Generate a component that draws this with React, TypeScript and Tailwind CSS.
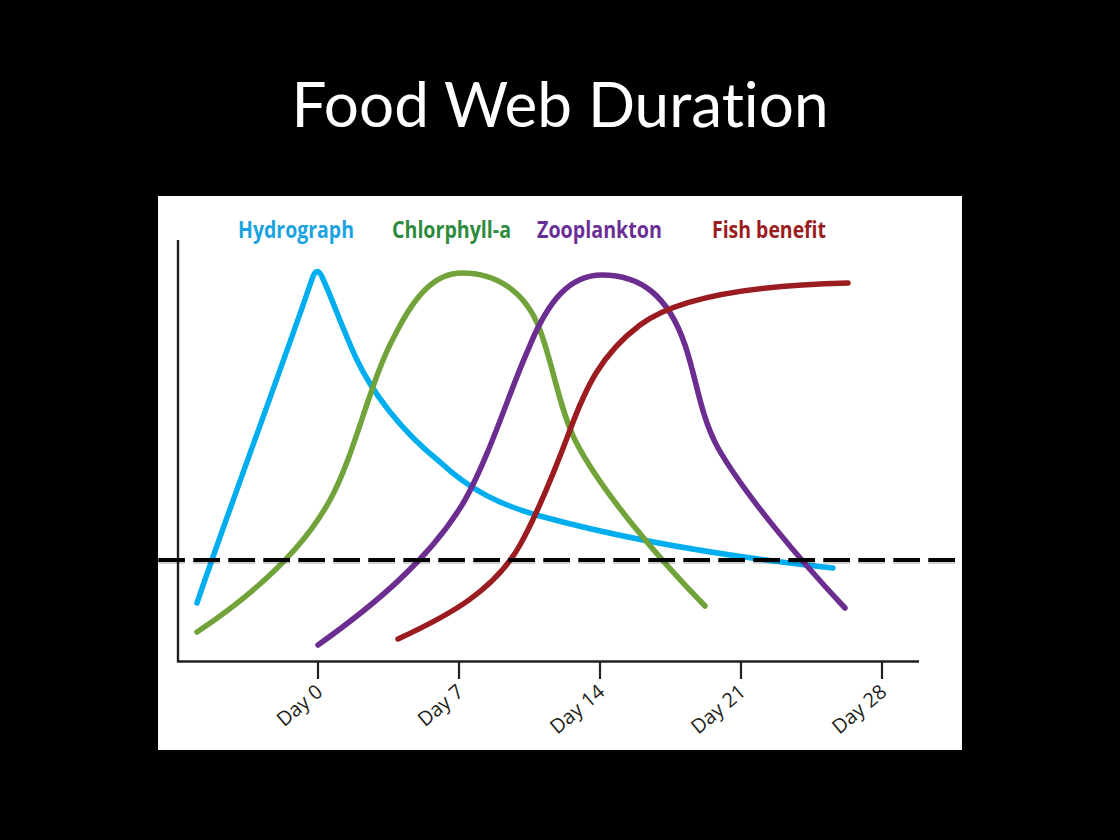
import React from 'react';

const curves = [
  {
    name: 'Hydrograph',
    color: '#00aeef',
    d: 'M197,603 C225,520 290,345 312,279 Q317,264 323,279 C331,296 343,330 356,358 C372,392 400,430 440,462 C470,490 500,505 540,516 C620,538 720,556 833,568',
  },
  {
    name: 'Chlorophyll-a',
    color: '#72a23a',
    d: 'M197,632 C245,600 300,555 330,500 C355,455 370,380 395,335 C415,295 435,273 462,273 C495,273 525,290 540,330 C553,365 560,410 575,440 C600,490 660,560 705,606',
  },
  {
    name: 'Zooplankton',
    color: '#6b2d90',
    d: 'M318,645 C370,608 430,560 465,500 C490,455 510,390 528,350 C548,300 570,275 602,275 C640,275 668,295 685,345 C697,380 700,415 718,448 C745,495 800,560 845,608',
  },
  {
    name: 'Fish benefit',
    color: '#9b1c20',
    d: 'M398,639 C450,615 495,590 520,545 C535,518 555,470 570,430 C585,390 600,355 640,325 C680,295 760,285 848,283',
  },
];

const legend = [
  { label: 'Hydrograph', x: 238, len: 116, color: '#1aa3e0' },
  { label: 'Chlorphyll-a', x: 392, len: 119, color: '#2e8b3e' },
  { label: 'Zooplankton', x: 537, len: 125, color: '#6a2f96' },
  { label: 'Fish benefit', x: 712, len: 114, color: '#9b1b20' },
];

const ticks = [
  { x: 318, label: 'Day 0' },
  { x: 459, label: 'Day 7' },
  { x: 600, label: 'Day 14' },
  { x: 741, label: 'Day 21' },
  { x: 882, label: 'Day 28' },
];

export default function App() {
  return (
    <div className="w-[1120px] h-[840px] bg-black flex flex-col items-center">
      <h1 className="mt-[72px] text-[62px] leading-[62px] text-white font-['Lato',sans-serif] font-normal [font-variant-ligatures:none]">
        Food Web Duration
      </h1>

      <div className="mt-[62px] w-[804px] h-[554px] bg-white">
        <svg width="804" height="554" viewBox="158 196 804 554" className="block">
          {/* legend */}
          {legend.map((l) => (
            <text
              key={l.label}
              x={l.x}
              y={238}
              fill={l.color}
              fontFamily="'Open Sans', sans-serif"
              fontWeight={700}
              fontSize={24}
              textLength={l.len}
              lengthAdjust="spacingAndGlyphs"
            >
              {l.label}
            </text>
          ))}

          {/* axes */}
          <line x1={178} y1={240} x2={178} y2={662} stroke="#231f20" strokeWidth={2.4} />
          <line x1={177} y1={661.5} x2={919} y2={661.5} stroke="#231f20" strokeWidth={2.4} />
          {ticks.map((t) => (
            <g key={t.label}>
              <line x1={t.x} y1={661} x2={t.x} y2={679} stroke="#231f20" strokeWidth={2.2} />
              <text
                x={t.x + 6}
                y={694}
                textAnchor="end"
                transform={`rotate(-40 ${t.x + 6} 694)`}
                fill="#231f20"
                fontFamily="'Open Sans', sans-serif"
                fontSize={20}
              >
                {t.label}
              </text>
            </g>
          ))}

          {/* curves */}
          {curves.map((c) => (
            <path
              key={c.name}
              d={c.d}
              fill="none"
              stroke={c.color}
              strokeWidth={5.5}
              strokeLinecap="round"
              strokeLinejoin="round"
            />
          ))}

          {/* threshold */}
          <line x1={158.3} y1={562} x2={955} y2={562} stroke="#000" strokeOpacity={0.18} strokeWidth={4} strokeDasharray="26.7 8.3" />
          <line x1={158.3} y1={560} x2={955} y2={560} stroke="#000" strokeWidth={4} strokeDasharray="26.7 8.3" />
        </svg>
      </div>
    </div>
  );
}
